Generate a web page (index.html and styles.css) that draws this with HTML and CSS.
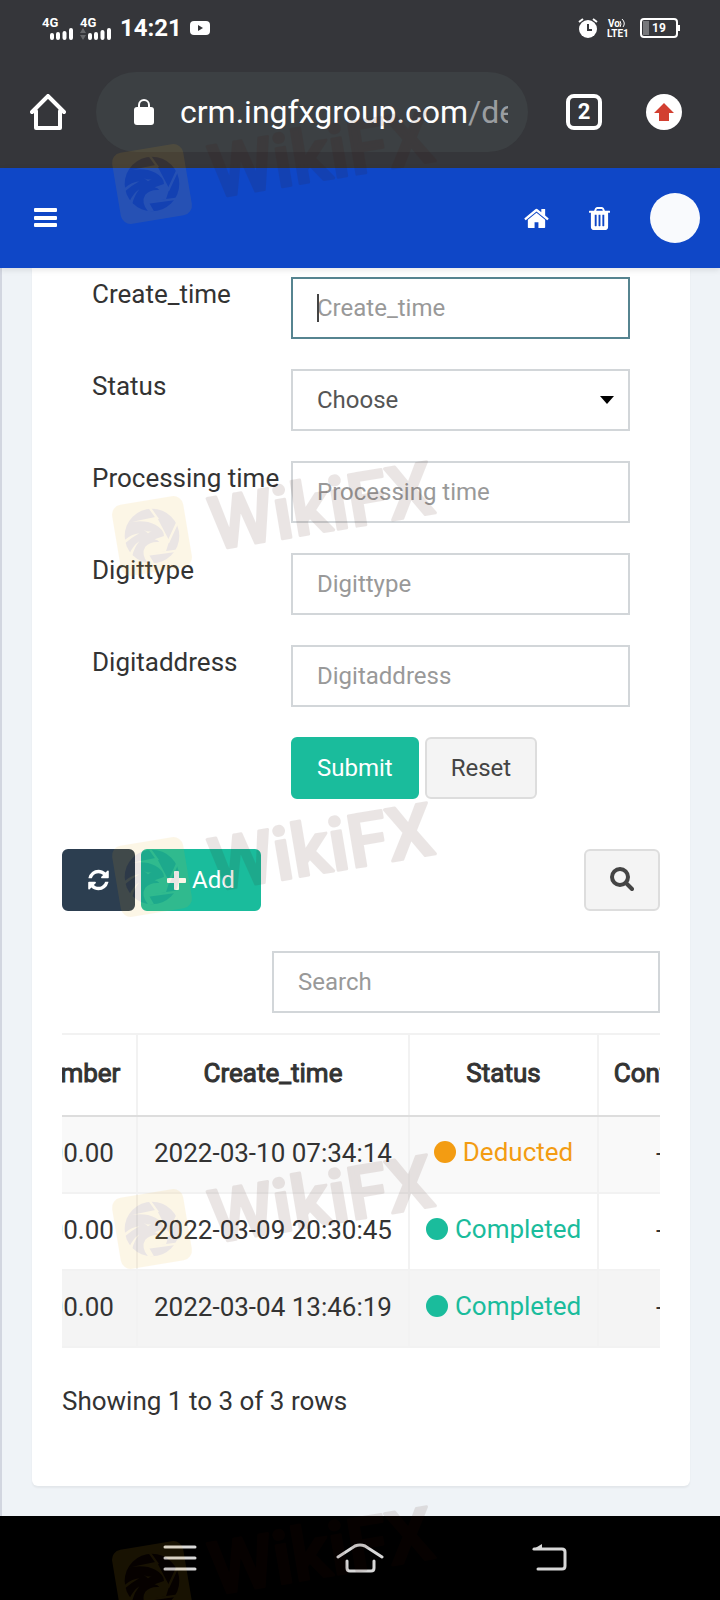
FILE: index.html
```html
<!DOCTYPE html>
<html lang="en">
<head>
    <meta charset="UTF-8">
    <meta name="viewport" content="width=device-width, initial-scale=1.0">
    <title>CRM</title>
    <link rel="stylesheet" href="styles.css">
</head>
<body>
    <div class="statusbar">
        <svg class="signal" width="72" height="24" viewBox="0 0 72 24">
            <text x="0" y="11">4G</text>
            <text x="38" y="11">4G</text>
            <path d="M10 22v-3M16 22v-4M22.500 22v-5M29 22v-8M48 22v-3M54 22v-4M60.500 22v-6M67 22v-8" stroke="#fff" stroke-width="4" stroke-linecap="round"/>
            <path d="M38 17l3-5 3 5zM38 19l3 5 3-5z" fill="#67686b"/>
        </svg>
        <span class="clock">14:21</span>
        <svg width="20" height="14" viewBox="0 0 20 14">
            <rect width="20" height="14" rx="4" fill="#fff"/>
            <path d="M8 4l5 3-5 3z" fill="#35363a"/>
        </svg>
        <div class="statusbar-right">
            <svg width="20" height="20" viewBox="0 0 20 20">
                <circle cx="10" cy="11" r="9" fill="#fff"/>
                <path d="M1 4l4-3M19 4l-4-3" stroke="#fff" stroke-width="2"/>
                <path d="M10 6v6h4" fill="none" stroke="#35363a" stroke-width="2"/>
            </svg>
            <svg class="volte" width="24" height="20" viewBox="0 0 24 20">
                <text x="1" y="9">Vo</text>
                <text x="0" y="19">LTE1</text>
                <path d="M13 3q2 3 0 6M15 1q4 4 1 8" fill="none" stroke="#fff"/>
            </svg>
            <svg class="battery" width="40" height="20" viewBox="0 0 40 20">
                <rect x="1" y="1" width="36" height="18" rx="3" fill="none" stroke="#fff" stroke-width="2"/>
                <rect x="3" y="3" width="6" height="14" fill="#77787b"/>
                <path d="M39 7v6" stroke="#fff" stroke-width="2"/>
                <text x="19" y="14" text-anchor="middle">19</text>
            </svg>
        </div>
    </div>

    <div class="browserbar">
        <button class="icon-btn" aria-label="Home page">
            <svg width="36" height="36" viewBox="0 0 36 36" fill="none" stroke="#fff" stroke-width="4" stroke-linejoin="round" stroke-linecap="round">
                <path d="M6 17v17h24V17"/>
                <path d="M2 18L18 2l16 16" stroke-linejoin="miter"/>
            </svg>
        </button>
        <div class="omnibox">
            <svg width="20" height="26" viewBox="0 0 20 26">
                <rect y="8" width="20" height="18" rx="3" fill="#fff"/>
                <path d="M5 9V6a5 5 0 0 1 10 0v3" fill="none" stroke="#fff" stroke-width="2"/>
            </svg>
            <span class="url">crm.ingfxgroup.com<span class="path">/de</span></span>
        </div>
        <button class="tabs" aria-label="Tabs">2</button>
        <button class="icon-btn" aria-label="Update">
            <svg width="36" height="36" viewBox="0 0 36 36">
                <circle cx="18" cy="18" r="18" fill="#fff"/>
                <path d="M18 9l10 10h-5v8H13v-8H8z" fill="#d23f31"/>
            </svg>
        </button>
    </div>

    <header class="navbar">
        <button class="icon-btn" aria-label="Menu">
            <svg width="24" height="20" viewBox="0 0 24 20" fill="#fff">
                <rect width="23" height="4" rx="1"/>
                <rect y="8" width="23" height="4" rx="1"/>
                <rect y="15" width="23" height="4" rx="1"/>
            </svg>
        </button>
        <div class="navbar-right">
            <a href="#" aria-label="Home">
                <svg width="25" height="27" viewBox="0 0 1664 1792" fill="#fff"><path d="M1408 992v480q0 26-19 45t-45 19h-384v-384h-256v384h-384q-26 0-45-19t-19-45v-480q0-1 .5-3t.5-3l575-474 575 474q1 2 1 6zm223-69l-62 74q-8 9-21 11h-3q-13 0-21-7l-692-577-692 577q-12 8-24 7-13-2-21-11l-62-74q-8-10-7-23.500t11-21.500l719-599q32-26 76-26t76 26l244 204v-195q0-14 9-23t23-9h192q14 0 23 9t9 23v408l219 182q10 8 11 21.500t-7 23.500z"/></svg>
            </a>
            <a href="#" aria-label="Clear cache">
                <svg width="21" height="27" viewBox="0 0 1408 1792" fill="#fff"><path d="M512 1376v-704q0-14-9-23t-23-9h-64q-14 0-23 9t-9 23v704q0 14 9 23t23 9h64q14 0 23-9t9-23zm256 0v-704q0-14-9-23t-23-9h-64q-14 0-23 9t-9 23v704q0 14 9 23t23 9h64q14 0 23-9t9-23zm256 0v-704q0-14-9-23t-23-9h-64q-14 0-23 9t-9 23v704q0 14 9 23t23 9h64q14 0 23-9t9-23zm-544-992h448l-48-117q-7-9-17-11h-317q-10 2-17 11zm928 32v64q0 14-9 23t-23 9h-96v948q0 83-47 143.500t-113 60.500h-832q-66 0-113-58.500t-47-141.500v-952h-96q-14 0-23-9t-9-23v-64q0-14 9-23t23-9h309l70-167q15-37 54-63t79-26h320q40 0 79 26t54 63l70 167h309q14 0 23 9t9 23z"/></svg>
            </a>
            <a href="#" class="avatar" aria-label="Profile"></a>
        </div>
    </header>

    <main class="content">
        <div class="panel">
            <form class="search-form">
                <div class="form-group">
                    <label for="create_time">Create_time</label>
                    <div class="field">
                        <input type="text" class="form-control focused" id="create_time" placeholder="Create_time">
                        <span class="caret"></span>
                    </div>
                </div>
                <div class="form-group">
                    <label for="status">Status</label>
                    <div class="field">
                        <select class="form-control" id="status">
                            <option>Choose</option>
                            <option>Deducted</option>
                            <option>Completed</option>
                        </select>
                        <svg class="arrow" width="14" height="8" viewBox="0 0 14 8"><path d="M0 0h14L7 8z"/></svg>
                    </div>
                </div>
                <div class="form-group">
                    <label for="processing_time">Processing time</label>
                    <div class="field">
                        <input type="text" class="form-control" id="processing_time" placeholder="Processing time">
                    </div>
                </div>
                <div class="form-group">
                    <label for="digittype">Digittype</label>
                    <div class="field">
                        <input type="text" class="form-control" id="digittype" placeholder="Digittype">
                    </div>
                </div>
                <div class="form-group">
                    <label for="digitaddress">Digitaddress</label>
                    <div class="field">
                        <input type="text" class="form-control" id="digitaddress" placeholder="Digitaddress">
                    </div>
                </div>
                <div class="form-actions">
                    <button type="button" class="btn btn-success">Submit</button>
                    <button type="reset" class="btn btn-default">Reset</button>
                </div>
            </form>

            <div class="toolbar">
                <button class="btn btn-primary" aria-label="Refresh">
                    <svg width="21" height="24" viewBox="0 0 1536 1792" fill="#fff"><path d="M1511 1056q0 5-1 7-64 268-268 434.500t-478 166.500q-146 0-282.500-55t-243.500-157l-129 129q-19 19-45 19t-45-19-19-45v-448q0-26 19-45t45-19h448q26 0 45 19t19 45-19 45l-137 137q71 66 161 102t187 36q134 0 250-65t186-179q11-17 53-117 8-23 30-23h192q13 0 22.500 9.500t9.500 22.500zm25-800v448q0 26-19 45t-45 19h-448q-26 0-45-19t-19-45 19-45l138-138q-148-137-349-137-134 0-250 65t-186 179q-11 17-53 117-8 23-30 23h-199q-13 0-22.500-9.500t-9.500-22.500v-7q65-268 270-434.500t480-166.500q146 0 284 55.500t245 156.500l130-129q19-19 45-19t45 19 19 45z"/></svg>
                </button>
                <button class="btn btn-success">
                    <svg width="19" height="19" viewBox="0 0 19 19" fill="#fff"><rect x="7" width="5" height="19" rx="1"/><rect y="7" width="19" height="5" rx="1"/></svg>
                    Add
                </button>
                <button class="btn btn-default btn-search" aria-label="Search">
                    <svg width="24" height="28" viewBox="0 0 24 28" fill="none" stroke="#444">
                        <circle cx="10" cy="11" r="8" stroke-width="4"/>
                        <path d="M16 17l6 6" stroke-width="4" stroke-linecap="round"/>
                    </svg>
                </button>
            </div>

            <input type="search" class="form-control table-search" placeholder="Search" aria-label="Search">

            <div class="table-wrap">
                <table>
                    <colgroup>
                        <col class="col-number">
                        <col class="col-time">
                        <col class="col-status">
                        <col class="col-content">
                    </colgroup>
                    <thead>
                        <tr><th>Number</th><th>Create_time</th><th>Status</th><th>Content</th></tr>
                    </thead>
                    <tbody>
                        <tr>
                            <td>100.00</td>
                            <td>2022-03-10 07:34:14</td>
                            <td><span class="state deducted">Deducted</span></td>
                            <td>-</td>
                        </tr>
                        <tr>
                            <td>100.00</td>
                            <td>2022-03-09 20:30:45</td>
                            <td><span class="state completed">Completed</span></td>
                            <td>-</td>
                        </tr>
                        <tr class="hover">
                            <td>100.00</td>
                            <td>2022-03-04 13:46:19</td>
                            <td><span class="state completed">Completed</span></td>
                            <td>-</td>
                        </tr>
                    </tbody>
                </table>
            </div>
            <p class="summary">Showing 1 to 3 of 3 rows</p>
        </div>
    </main>

    <nav class="android-nav">
        <button aria-label="Recent apps">
            <svg width="34" height="30" viewBox="0 0 34 30" stroke="#d8d8d8" stroke-width="3" stroke-linecap="round"><path d="M2 4h30M2 15h30M2 26h30"/></svg>
        </button>
        <button aria-label="Home">
            <svg width="48" height="30" viewBox="0 0 48 30" fill="none" stroke="#d8d8d8" stroke-width="3" stroke-linecap="round" stroke-linejoin="round"><path d="M2 14L19 3q5-2 10 0l17 11M11 18v7q0 3 3 3h21q3 0 3-3v-7"/></svg>
        </button>
        <button aria-label="Back">
            <svg width="54" height="30" viewBox="0 0 54 30" fill="none" stroke="#d8d8d8" stroke-width="3" stroke-linecap="round"><path d="M21 6h28q3 0 3 3v14q0 3-3 3H25"/><path d="M19 7l10-6v6z" fill="#d8d8d8" stroke="none"/></svg>
        </button>
    </nav>

    <svg width="0" height="0" class="defs">
        <symbol id="badge" viewBox="0 0 340 135">
            <rect x="16" y="48" width="72" height="72" rx="10" fill="#ecad1b" transform="rotate(-9.500 52 84)"/>
            <!-- eagle head inside an aperture ring -->
            <g transform="translate(-100 -100) scale(.3333)">
                <circle cx="456" cy="552" r="82" fill="#3c1008"/>
                <g fill="#ecad1b">
                    <path d="M376 514L470 494L508 566L498 598L446 606L462 634L444 634Q422 606 436 584Q450 568 478 570Q474 564 464 562L492 552Q492 532 466 518Q430 500 376 514Z"/>
                    <path d="M432 534Q444 542 456 536L444 544Z"/>
                    <path d="M374 564Q396 546 418 544Q396 556 375 574ZM388 606Q400 580 418 568Q402 588 396 614Z"/>
                </g>
                <path d="M448 466L474 502M542 490L504 572M532 596L444 608" stroke="#ecad1b" stroke-width="7"/>
            </g>
        </symbol>
    </svg>
    <div class="watermarks" aria-hidden="true">
        <svg class="mark mark-1" viewBox="0 0 340 135"><use href="#badge"/><text transform="translate(114 98) rotate(-9.500)">WikiFX</text></svg>
        <svg class="mark mark-2" viewBox="0 0 340 135"><use href="#badge"/><text transform="translate(114 98) rotate(-9.500)">WikiFX</text></svg>
        <svg class="mark mark-3" viewBox="0 0 340 135"><use href="#badge"/><text transform="translate(114 98) rotate(-9.500)">WikiFX</text></svg>
        <svg class="mark mark-4" viewBox="0 0 340 135"><use href="#badge"/><text transform="translate(114 98) rotate(-9.500)">WikiFX</text></svg>
        <svg class="mark mark-5" viewBox="0 0 340 135"><use href="#badge"/><text transform="translate(114 98) rotate(-9.500)">WikiFX</text></svg>
    </div>
</body>
</html>
```
FILE: styles.css
```css
* {
    box-sizing: border-box;
}
body {
    margin: 0;
    min-height: 100vh;
    display: flex;
    flex-direction: column;
    position: relative;
    font-family: Roboto, "Liberation Sans", sans-serif;
    font-size: 26px;
    color: #333;
    background-color: #eff3f7;
}
button, input, select {
    font-family: inherit;
}
svg {
    display: block;
    flex: none;
}

/* phone status bar */
.statusbar {
    display: flex;
    align-items: center;
    height: 56px;
    padding: 0 40px 0 42px;
    background-color: #35363a;
    color: #fff;
}
.signal text {
    font-size: 13px;
    font-weight: 700;
    fill: #fff;
}
.clock {
    margin: 0 8px 0 6px;
    font-size: 24px;
    font-weight: 700;
}
.statusbar-right {
    display: flex;
    gap: 9px;
    margin-left: auto;
}
.volte text {
    font-size: 10px;
    font-weight: 700;
    fill: #fff;
}
.battery text {
    font-size: 12px;
    font-weight: 700;
    fill: #fff;
}

/* browser bar */
.browserbar {
    display: flex;
    align-items: center;
    height: 112px;
    padding: 0 38px 0 30px;
    background-color: #35363a;
}
.icon-btn {
    padding: 0;
    border: 0;
    background: none;
}
.omnibox {
    flex: 1;
    min-width: 0;
    display: flex;
    align-items: center;
    gap: 26px;
    height: 80px;
    margin: 0 38px 0 30px;
    padding: 0 20px 0 38px;
    border-radius: 40px;
    background-color: #3c4043;
}
.url {
    flex: 1;
    overflow: hidden;
    white-space: nowrap;
    font-size: 32px;
    color: #fff;
}
.url .path {
    color: #9a9da0;
}
.tabs {
    width: 36px;
    height: 36px;
    margin-right: 44px;
    padding: 0;
    border: 4px solid #fff;
    border-radius: 8px;
    background: none;
    color: #fff;
    font-size: 22px;
    font-weight: 700;
    line-height: 28px;
}

/* page header */
.navbar {
    display: flex;
    align-items: center;
    justify-content: space-between;
    height: 100px;
    padding: 0 20px 0 34px;
    background-color: #0f47c7;
    box-shadow: 0 2px 6px rgba(0, 0, 0, 0.1);
    z-index: 1;
}
.navbar-right {
    display: flex;
    align-items: center;
    gap: 40px;
}
.avatar {
    width: 50px;
    height: 50px;
    border-radius: 50%;
    background-color: #f9fafd;
}

.content {
    flex: 1;
    padding: 0 30px 30px;
    border-left: 2px solid #d2d6e0;
}
.panel {
    padding: 9px 30px 68px;
    border-radius: 0 0 6px 6px;
    background-color: #fff;
    box-shadow: 0 2px 2px rgba(0, 0, 0, 0.05);
}
.search-form {
    padding: 0 30px;
}
.form-group {
    display: grid;
    grid-template-columns: 199px 1fr;
    margin-bottom: 30px;
}
.form-group label {
    line-height: 34px;
}
.field {
    position: relative;
}
.form-control {
    display: block;
    width: 100%;
    height: 62px;
    padding: 0 24px;
    border: 2px solid #d2d6d9;
    border-radius: 0;
    background-color: #fff;
    color: #555;
    font-size: 24px;
    appearance: none;
}
.form-control::placeholder {
    color: #999;
}
.form-control.focused {
    border-color: #568490;
}
.caret {
    position: absolute;
    top: 17px;
    left: 26px;
    width: 2px;
    height: 28px;
    background-color: #444;
}
.arrow {
    position: absolute;
    top: 27px;
    right: 16px;
}
.form-actions {
    display: flex;
    gap: 6px;
    padding-left: 199px;
}
.btn {
    display: flex;
    align-items: center;
    gap: 6px;
    height: 62px;
    padding: 0 24px;
    border: 2px solid transparent;
    border-radius: 6px;
    font-size: 24px;
}
.btn-success {
    border-color: #1abc9c;
    background-color: #1abc9c;
    color: #fff;
}
.btn-default {
    border-color: #ddd;
    background-color: #f4f4f4;
    color: #444;
}
.btn-primary {
    border-color: #2c3e50;
    background-color: #2c3e50;
    color: #fff;
}

.toolbar {
    display: flex;
    gap: 6px;
    margin: 50px 0 40px;
}
.btn-search {
    margin-left: auto;
}
.table-search {
    width: 388px;
    margin: 0 0 20px auto;
}

/* table is scrolled sideways past its first columns */
.table-wrap {
    overflow: hidden;
}
table {
    width: 712px;
    margin-left: -52px;
    table-layout: fixed;
    border-collapse: collapse;
    text-align: center;
    white-space: nowrap;
}
.col-number {
    width: 126px;
}
.col-time {
    width: 272px;
}
.col-status {
    width: 189px;
}
th, td {
    height: 77px;
    padding: 0 0 4px;
    border: 2px solid #f2f2f2;
}
th {
    height: 82px;
    border-bottom-color: #ddd;
    font-weight: 400;
    -webkit-text-stroke: 1px #333;
}
tbody tr:first-child {
    background-color: #f9f9f9;
}
tbody tr.hover {
    background-color: #f4f4f4;
}
.state {
    display: inline-flex;
    align-items: center;
    gap: 7px;
}
.state::before {
    content: "";
    width: 22px;
    height: 22px;
    border-radius: 50%;
    background-color: currentColor;
}
.deducted {
    color: #f39c12;
}
.completed {
    color: #1abc9c;
}
.summary {
    margin: 36px 0 0;
    line-height: 34px;
}

.android-nav {
    display: flex;
    align-items: center;
    height: 84px;
    padding: 0 90px;
    background-color: #000;
}
.android-nav button {
    flex: 1;
    display: flex;
    justify-content: center;
    padding: 0;
    border: 0;
    background: none;
}

/* watermark overlay */
.defs {
    position: absolute;
}
.watermarks {
    position: absolute;
    inset: 0;
    overflow: hidden;
    pointer-events: none;
    z-index: 2;
}
.mark {
    position: absolute;
    left: 100px;
    width: 340px;
    height: 135px;
    opacity: 0.1;
}
.mark text {
    font-size: 73px;
    font-weight: 500;
    fill: #3c1008;
    stroke: #3c1008;
    stroke-width: 3;
    stroke-linejoin: round;
}
.mark-1 { top: 100px; }
.mark-2 { top: 452px; }
.mark-3 { top: 793px; }
.mark-4 { top: 1145px; }
.mark-5 { top: 1497px; }
```
